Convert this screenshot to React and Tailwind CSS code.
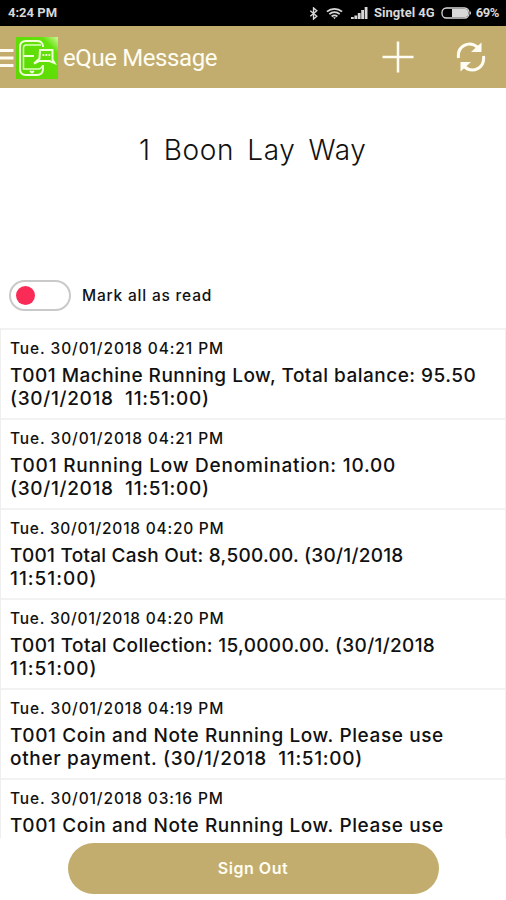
import React, { useState } from 'react';

const MESSAGES = [
    {
        date: 'Tue. 30/01/2018 04:21 PM',
        dateSpacing: 'tracking-[0.89px]',
        lines: [
            { text: 'T001 Machine Running Low, Total balance: 95.50', spacing: 'tracking-[0.49px]' },
            { text: '(30/1/2018  11:51:00)', spacing: 'tracking-[0.67px]' },
        ],
    },
    {
        date: 'Tue. 30/01/2018 04:21 PM',
        dateSpacing: 'tracking-[0.89px]',
        lines: [
            { text: 'T001 Running Low Denomination: 10.00', spacing: 'tracking-[0.79px]' },
            { text: '(30/1/2018  11:51:00)', spacing: 'tracking-[0.67px]' },
        ],
    },
    {
        date: 'Tue. 30/01/2018 04:20 PM',
        dateSpacing: 'tracking-[0.76px]',
        lines: [
            { text: 'T001 Total Cash Out: 8,500.00. (30/1/2018', spacing: 'tracking-[0.25px]' },
            { text: '11:51:00)', spacing: 'tracking-[1px]' },
        ],
    },
    {
        date: 'Tue. 30/01/2018 04:20 PM',
        dateSpacing: 'tracking-[0.76px]',
        lines: [
            { text: 'T001 Total Collection: 15,0000.00. (30/1/2018', spacing: 'tracking-[0.32px]' },
            { text: '11:51:00)', spacing: 'tracking-[1px]' },
        ],
    },
    {
        date: 'Tue. 30/01/2018 04:19 PM',
        dateSpacing: 'tracking-[0.89px]',
        lines: [
            { text: 'T001 Coin and Note Running Low. Please use', spacing: 'tracking-[0.61px]' },
            { text: 'other payment. (30/1/2018  11:51:00)', spacing: 'tracking-[0.68px]' },
        ],
    },
    {
        date: 'Tue. 30/01/2018 03:16 PM',
        dateSpacing: 'tracking-[0.89px]',
        lines: [
            { text: 'T001 Coin and Note Running Low. Please use', spacing: 'tracking-[0.61px]' },
        ],
    },
];

function App() {
    const [allRead, setAllRead] = useState(false);

    return (
        <div className="w-[506px] h-[900px] overflow-hidden flex flex-col bg-white text-[#111] font-['Inter',sans-serif]">
            <StatusBar />
            <Header />

            <h1 className="h-[122px] shrink-0 pt-[44px] pl-[139px] text-[28px] leading-[36px] font-light tracking-[0.65px] [word-spacing:4.5px] whitespace-nowrap">
                1 Boon Lay Way
            </h1>

            <div className="h-[118px] shrink-0 flex items-end pl-[9px] pb-[17px]">
                <button
                    onClick={() => setAllRead(!allRead)}
                    className="w-[62px] h-[31px] rounded-full border-2 border-[#c9c9c9] bg-white flex items-center px-[5px]"
                >
                    <span className={`w-[19px] h-[19px] rounded-full bg-[#fa2b56] ${allRead ? 'ml-auto' : ''}`}></span>
                </button>
                <span className="ml-[11px] mb-[4px] text-[15.5px] leading-[22px] font-medium tracking-[0.8px]">Mark all as read</span>
            </div>

            {/* Message list */}
            <div className="h-[510px] shrink-0 overflow-hidden border-x border-[#efefef]">
                {MESSAGES.map((msg, i) => (
                    <MessageRow key={i} {...msg} />
                ))}
            </div>

            <div className="flex-1 pt-[5px] flex justify-center">
                <button className="w-[371px] h-[51px] pb-[2px] rounded-full bg-[#c2ad6e] text-[#fffdf2] text-[16px] font-semibold tracking-[0.55px]">
                    Sign Out
                </button>
            </div>
        </div>
    );
}

const MessageRow = ({ date, dateSpacing, lines }) => {
    return (
        <div className="h-[90px] pt-[8px] pl-[9px] border-t-2 border-[#f2f2f2] whitespace-pre">
            <div className={`text-[15.5px] leading-[22px] font-medium ${dateSpacing}`}>{date}</div>
            <div className="mt-[4px] text-[19px] leading-[23px] font-medium">
                {lines.map(({ text, spacing }) => (
                    <div key={text} className={spacing}>{text}</div>
                ))}
            </div>
        </div>
    );
};

const StatusBar = () => {
    return (
        <div className="h-[26px] shrink-0 bg-black text-[#d8d8d8] flex items-center pl-[8px] pr-[7px] font-['Roboto',sans-serif] text-[13px] font-bold">
            <span>4:24 PM</span>
            <svg className="ml-auto" width="10" height="13" viewBox="0 0 10 14" fill="none" stroke="currentColor" strokeWidth="1.5">
                <path d="M1 4l7 6-3.5 3V1L8 4l-7 6" />
            </svg>
            <svg className="ml-[7px]" width="17" height="13" viewBox="0 0 18 13" fill="none" stroke="currentColor" strokeWidth="1.9">
                <path d="M1 4.5c4.600-4 11.400-4 16 0M3.500 7.200c3.200-2.800 7.800-2.800 11 0M6 9.700c1.800-1.500 4.200-1.500 6 0" />
                <path d="M7.500 10.500h3L9 12.500z" fill="currentColor" stroke="none" />
            </svg>
            <svg className="ml-[8px]" width="17" height="12" viewBox="0 0 17 12" fill="currentColor">
                <path d="M0 10h2.800v2H0zM3.400 8.500h2.800V12H3.400zM6.800 6h2.800v6H6.800zM10.200 3H13v9h-2.800zM13.700 0h2.800v12h-2.800z" />
            </svg>
            <span className="ml-[6px]">Singtel 4G</span>
            <svg className="ml-[6px]" width="31" height="12" viewBox="0 0 31 12">
                <rect x="1" y="1" width="27" height="10" rx="4.500" fill="none" stroke="currentColor" strokeWidth="1.300" />
                <path d="M11 2h13.500a2.500 2.500 0 0 1 2.500 2.500v3a2.500 2.500 0 0 1-2.500 2.500H11z" fill="currentColor" />
                <path d="M29 4q2 2 0 4z" fill="currentColor" />
            </svg>
            <span className="ml-[4px] tracking-[-0.4px]">69%</span>
        </div>
    );
};

const Header = () => {
    return (
        <header className="h-[62px] shrink-0 bg-[#c2ad6e] flex items-center text-[#fffdf3]">
            <svg className="mt-px" width="14" height="20" viewBox="0 0 14 20" fill="none" stroke="currentColor" strokeWidth="3">
                <path d="M0 2.500h13.500M0 10h13.500M0 17.500h13.500" />
            </svg>
            <AppLogo />
            <span className="ml-[5px] mt-[2px] font-['Roboto',sans-serif] text-[24px] leading-[32px] tracking-[-0.4px]">eQue Message</span>
            <svg className="ml-auto" width="32" height="32" viewBox="0 0 32 32" fill="none" stroke="currentColor" strokeWidth="2.500">
                <path d="M16 .500v31M.500 16h31" />
            </svg>
            <svg className="ml-[42px] mr-[20px]" width="30" height="32" viewBox="0 0 30 32" fill="none" stroke="currentColor" strokeWidth="3">
                <path d="M2.500 17C1 5 13 -1 22 6.500M27.500 15C29 27 17 33 8 25.500" />
                <path d="M25.500 1.500v9.500H15zM4.500 30.500V21H15z" fill="currentColor" stroke="none" />
            </svg>
        </header>
    );
};

// Phone outline forming an "E", with a chat bubble on its right
const AppLogo = () => {
    return (
        <svg className="ml-[2px] mt-px" width="42" height="42" viewBox="0 0 42 42" fill="none">
            <defs>
                <linearGradient id="logoBg" x1="0" y1="42" x2="42" y2="0" gradientUnits="userSpaceOnUse">
                    <stop offset="0" stopColor="#5cd800" />
                    <stop offset="0.800" stopColor="#62e30a" />
                    <stop offset="1" stopColor="#d2f79b" />
                </linearGradient>
            </defs>
            <rect width="42" height="42" fill="url(#logoBg)" />
            <path d="M27 10V8.500Q26 4 21 4H10Q4 4 4 10v22q0 6 6 6h11q5 0 6-5v-5" stroke="#f1ffdc" strokeWidth="1.800" />
            <path d="M25 8H10Q7.500 8 7.500 11v21h15q3 0 3.500-3" stroke="#dcffc0" strokeWidth="1.500" />
            <path d="M8 19h10M14 34l2 1.500 2-1.500" stroke="#f1ffdc" strokeWidth="1.900" />
            <path d="M24 13h12.500v9.500L38.500 26l-5-2H23l-5 2.500 5.500-5z" stroke="#f1ffdc" strokeWidth="2" />
            <path d="M26.500 18h1.800M29.500 18h1.800M32.500 18h1.800" stroke="#f1ffdc" strokeWidth="1.800" />
        </svg>
    );
};

export default App;
